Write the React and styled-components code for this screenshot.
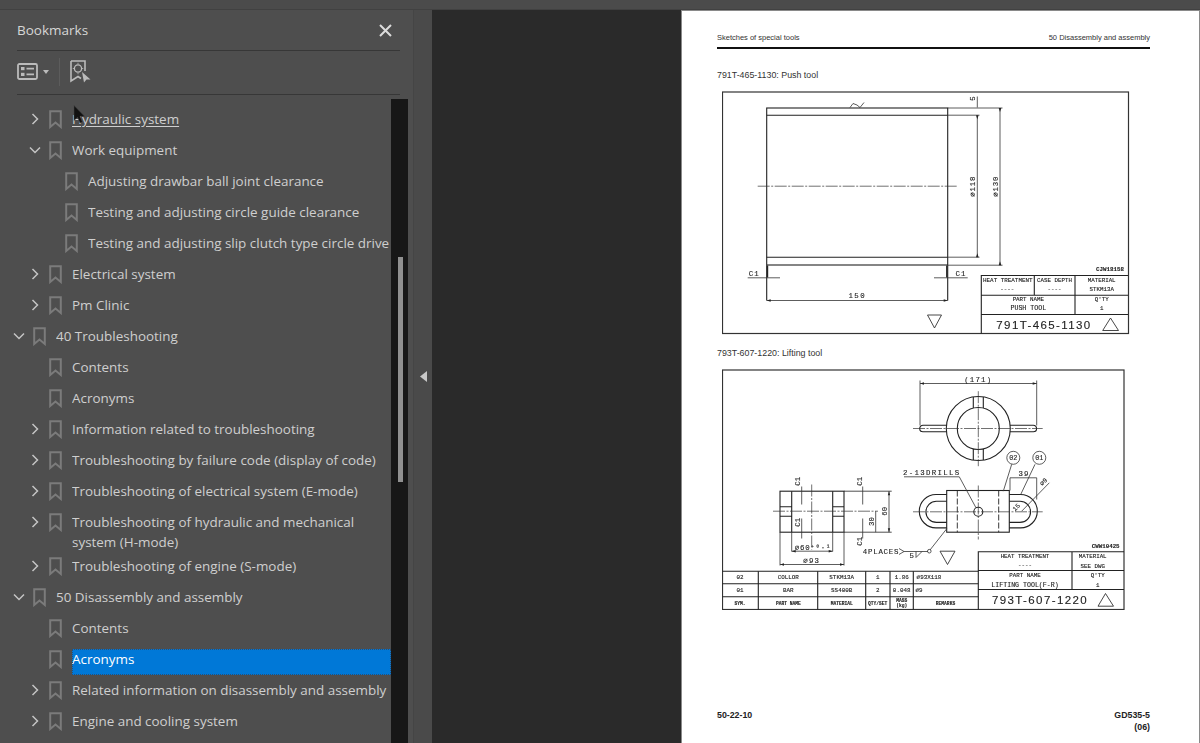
import React from "react";
import styled, { createGlobalStyle } from "styled-components";

const GlobalStyle = createGlobalStyle`
  html, body {
    margin: 0;
    padding: 0;
    height: 100%;
    overflow: hidden;
    background: #2a2a2a;
  }
  #root {
    height: 100%;
  }
`;

const Shell = styled.div`
  width: 1200px;
  height: 743px;
  display: flex;
  flex-direction: column;
  font-family: "Open Sans", "Noto Sans", sans-serif;
  overflow: hidden;
`;

const TopStrip = styled.div`
  height: 9px;
  flex: none;
  background: #4b4b4b;
  border-bottom: 1px solid #414141;
`;

const Workspace = styled.div`
  flex: 1;
  min-height: 0;
  display: flex;
`;

const Panel = styled.aside`
  width: 414px;
  flex: none;
  display: flex;
  flex-direction: column;
  background: #4e4e4e;
  border-right: 1px solid #454545;
  box-sizing: border-box;
  position: relative;
`;

const PanelHeader = styled.div`
  height: 40px;
  margin: 0 13px 0 17px;
  flex: none;
  display: flex;
  align-items: center;
  justify-content: space-between;
  border-bottom: 1px solid #373737;
  color: #d6d6d6;
  font-size: 13.5px;
`;

const CloseButton = styled.button`
  width: 16px;
  height: 16px;
  margin-right: 7px;
  padding: 0;
  border: 0;
  background: none;
  color: #dcdcdc;
  display: flex;
  align-items: center;
  justify-content: center;
`;

const Toolbar = styled.div`
  height: 41px;
  padding-bottom: 2px;
  margin: 0 13px 0 17px;
  flex: none;
  display: flex;
  align-items: center;
  border-bottom: 1px solid #373737;
`;

const ToolDivider = styled.div`
  width: 1px;
  height: 28px;
  margin: 0 10px 0 10px;
  background: #5c5c5c;
`;

const TreeArea = styled.div`
  flex: 1;
  min-height: 0;
  display: flex;
  padding-top: 4px;
  margin-right: 5px;
`;

const TreeList = styled.div`
  flex: 1;
  min-width: 0;
  padding-top: 4.5px;
  overflow: hidden;
`;

const Scrollbar = styled.div`
  width: 17px;
  flex: none;
  background: #171717;
  padding: 158px 5px 0 6.5px;
  box-sizing: border-box;
`;

const ScrollThumb = styled.div`
  height: 225px;
  background: #909090;
`;

const Row = styled.div`
  height: ${(p) => (p.$tall ? "44px" : "31px")};
  display: flex;
  align-items: flex-start;
  padding-left: ${(p) => p.$level * 16 + 10}px;
`;

const ChevronSlot = styled.span`
  width: 17px;
  height: 31px;
  flex: none;
  display: flex;
  align-items: center;
  justify-content: center;
  color: #c4c4c4;
`;

const MarkSlot = styled.span`
  width: 13px;
  height: 31px;
  margin: 0 10px 0 6px;
  flex: none;
  display: flex;
  align-items: center;
  justify-content: center;
`;

const Label = styled.span`
  flex: 1;
  min-width: 0;
  margin-top: 5px;
  height: ${(p) => (p.$tall ? "40px" : p.$selected ? "26px" : "21px")};
  color: ${(p) => (p.$selected ? "#ffffff" : "#cfcfcf")};
  background: ${(p) => (p.$selected ? "#0078d7" : "transparent")};
  outline: ${(p) => (p.$selected ? "1px dotted #2a4f74" : "none")};
  outline-offset: -1px;
  font-size: 13.45px;
  line-height: 20px;
  white-space: ${(p) => (p.$tall ? "normal" : "nowrap")};
  overflow: hidden;
  text-decoration: ${(p) => (p.$link ? "underline" : "none")};
  text-underline-offset: 2px;
`;

const Cursor = styled.svg`
  position: absolute;
  left: 73px;
  top: 95px;
`;

const Splitter = styled.div`
  width: 18px;
  flex: none;
  background: #4a4a4a;
  display: flex;
  align-items: center;
  justify-content: center;
`;

const Gutter = styled.div`
  width: 249px;
  flex: none;
  background: #2a2a2a;
`;

const Sheet = styled.main`
  flex: 1;
  min-width: 0;
  background: #fff;
  border: 1px solid #8a8a8a;
  border-bottom: 0;
  box-sizing: border-box;
  padding: 21px 49px 0 35px;
  font-family: "Liberation Sans", Arial, sans-serif;
  color: #222;
  display: flex;
  flex-direction: column;
`;

const SheetHead = styled.div`
  display: flex;
  justify-content: space-between;
  font-size: 7.5px;
  line-height: 11px;
  padding-bottom: 4px;
  border-bottom: 2px solid #111;
  color: #333;
`;

const Caption = styled.div`
  font-size: 8.85px;
  line-height: 12px;
  color: #333;
  margin-top: ${(p) => p.$top}px;
`;

const Drawing = styled.svg`
  display: block;
  margin-left: 5px;
  margin-top: ${(p) => p.$top}px;
  flex: none;
  filter: blur(0.3px);
  font-family: "Liberation Mono", monospace;
  text {
    stroke: #222;
    stroke-width: 0.12;
    fill: #222;
    text-anchor: middle;
    dominant-baseline: central;
  }
`;

const SheetFoot = styled.div`
  margin-top: 99px;
  display: flex;
  justify-content: space-between;
  font-size: 8.8px;
  line-height: 12px;
  font-weight: 700;
  color: #222;
`;

const FootRight = styled.div`
  text-align: right;
`;

const rows = [
  { level: 1, label: "Hydraulic system", state: "closed", link: true },
  { level: 1, label: "Work equipment", state: "open" },
  { level: 2, label: "Adjusting drawbar ball joint clearance" },
  { level: 2, label: "Testing and adjusting circle guide clearance" },
  { level: 2, label: "Testing and adjusting slip clutch type circle drive" },
  { level: 1, label: "Electrical system", state: "closed" },
  { level: 1, label: "Pm Clinic", state: "closed" },
  { level: 0, label: "40 Troubleshooting", state: "open" },
  { level: 1, label: "Contents" },
  { level: 1, label: "Acronyms" },
  { level: 1, label: "Information related to troubleshooting", state: "closed" },
  { level: 1, label: "Troubleshooting by failure code (display of code)", state: "closed" },
  { level: 1, label: "Troubleshooting of electrical system (E-mode)", state: "closed" },
  { level: 1, label: "Troubleshooting of hydraulic and mechanical system (H-mode)", state: "closed", tall: true },
  { level: 1, label: "Troubleshooting of engine (S-mode)", state: "closed" },
  { level: 0, label: "50 Disassembly and assembly", state: "open" },
  { level: 1, label: "Contents" },
  { level: 1, label: "Acronyms", selected: true },
  { level: 1, label: "Related information on disassembly and assembly", state: "closed" },
  { level: 1, label: "Engine and cooling system", state: "closed" },
];

const Chevron = ({ open }) => (
  <svg width="12" height="12" viewBox="0 0 12 12" fill="none" stroke="currentColor" strokeWidth="1.5">
    {open ? <path d="M1 3.5 6 8.5 11 3.5" /> : <path d="M3.5 1 8.5 6 3.5 11" />}
  </svg>
);

const Mark = () => (
  <svg width="13" height="19" viewBox="0 0 13 19" fill="none" stroke="#7b7b7b" strokeWidth="2">
    <path d="M1.2 1.2H11.8V17L6.5 12.6 1.2 17Z" />
  </svg>
);

const OutlineIcon = () => (
  <svg width="21" height="17" viewBox="0 0 21 17" fill="none">
    <rect x="1" y="1" width="19" height="15" rx="1.5" stroke="#bbb" strokeWidth="1.8" />
    <rect x="4" y="4" width="3.5" height="3.2" fill="#bbb" />
    <rect x="4" y="9.8" width="3.5" height="3.2" fill="#bbb" />
    <path d="M9.5 5.6H17M9.5 11.4H17" stroke="#bbb" strokeWidth="1.8" />
  </svg>
);

const Caret = () => (
  <svg width="6" height="4" viewBox="0 0 6 4" style={{ marginLeft: 5 }}>
    <path d="M0 0H6L3 4Z" fill="#bbb" />
  </svg>
);

const FindMarkIcon = () => (
  <svg width="21" height="23" viewBox="0 0 21 23" fill="none">
    <path d="M1 1H15V11M1 1V21L8 16.5 11 18.5" stroke="#bbb" strokeWidth="1.6" />
    <circle cx="8" cy="8.5" r="3.6" stroke="#bbb" strokeWidth="1.3" />
    <path d="M8 2.8V3.8M8 13.2V14.2M2.8 8.5H3.8M12.2 8.5H13.2" stroke="#bbb" strokeWidth="1" />
    <path d="M12 12 20.5 19.5 16.5 19.5 14 22.5Z" fill="#bbb" />
  </svg>
);

const TreeRow = ({ level, label, state, link, tall, selected }) => (
  <Row $level={level} $tall={tall}>
    <ChevronSlot>{state && <Chevron open={state === "open"} />}</ChevronSlot>
    <MarkSlot>
      <Mark />
    </MarkSlot>
    <Label $tall={tall} $selected={selected} $link={link}>
      {label}
    </Label>
  </Row>
);

// shared line weights for the sketches
const heavy = { stroke: "#222", strokeWidth: 1.1, fill: "none" };
const thin = { stroke: "#333", strokeWidth: 0.8, fill: "none" };
const centre = { stroke: "#333", strokeWidth: 0.7, strokeDasharray: "12 1.5 2 1.5", fill: "none" };
const dashed = { stroke: "#222", strokeWidth: 0.9, strokeDasharray: "6 2", fill: "none" };

const PushToolDrawing = () => (
  <Drawing $top={10} width="408" height="244" viewBox="722 91.5 408 244">
    <rect x="722.5" y="92.5" width="406" height="241.5" fill="none" stroke="#333" strokeWidth="1.2" />
    <g {...heavy}>
      <rect x="766.7" y="108.5" width="181" height="157" />
      <path d="M766.7 115.7H947.7M766.7 257.7H947.7" />
      <path d="M766.7 265.7V301M947.7 265.7V301" />
      <path d="M767.5 266V278M946.8 266V278" strokeWidth="1.4" />
    </g>
    <path d="M757.7 186.7H956.7" {...centre} />
    <path d="M850 108 853 104 857 105.5 860 108 864 103" {...thin} />
    <g {...thin}>
      <path d="M947.7 108.5H1002.5M947.7 115.7H979.5M947.7 257.7H979.5M947.7 265.7H1002.5" />
      <path d="M977.3 97V108M977.3 115.7V257.7M1000 108.5V265.7" />
      <path d="M747.7 278.3H780M934 278.3H967.7M766.7 301H947.7" />
    </g>
    <g fill="#222">
      <path d="M976 115.7h2.6l-1.3 4ZM976 257.7h2.6l-1.3-4ZM998.7 108.5h2.6l-1.3 4ZM998.7 265.7h2.6l-1.3-4ZM766.7 301l4-1.2v2.4ZM947.7 301l-4-1.2v2.4Z" />
    </g>
    <g fontSize="7.4">
      <text x="973" y="99" transform="rotate(-90 973 99)">5</text>
      <text x="972.7" y="186.7" transform="rotate(-90 972.7 186.7)" letterSpacing="0.8">⌀118</text>
      <text x="995.7" y="186.7" transform="rotate(-90 995.7 186.7)" letterSpacing="0.8">⌀130</text>
      <text x="754.3" y="274" letterSpacing="1">C1</text>
      <text x="961" y="274" letterSpacing="1">C1</text>
      <text x="857.3" y="296.5" letterSpacing="1.5">150</text>
    </g>
    <path d="M927.5 315.5H941.5L934.5 328.5Z" {...thin} strokeWidth="0.9" />
    <g {...heavy}>
      <path d="M981.3 334V276H1128M981.3 295.7H1128M981.3 315H1128M1075 276V315M1034.3 276V295.7" />
    </g>
    <g fontSize="5.8">
      <text x="1110" y="270" fontWeight="700">CJW18158</text>
      <text x="1007.8" y="280.5" fontSize="5.9">HEAT TREATMENT</text>
      <text x="1007.3" y="289.5">----</text>
      <text x="1054.5" y="280.5">CASE DEPTH</text>
      <text x="1054.5" y="289.5">----</text>
      <text x="1101.7" y="280.5">MATERIAL</text>
      <text x="1101.7" y="289.5">STKM13A</text>
      <text x="1028.3" y="300">PART NAME</text>
      <text x="1028.3" y="309.3" fontSize="6.6">PUSH TOOL</text>
      <text x="1101.7" y="300">Q'TY</text>
      <text x="1101.7" y="309.3">1</text>
    </g>
    <text x="1044" y="325.3" fontSize="11.5" letterSpacing="1.4" fontFamily="Liberation Sans">791T-465-1130</text>
    <path d="M1110.5 318.5 1118.5 331H1102.7Z" {...thin} strokeWidth="0.9" />
  </Drawing>
);

const LiftingToolDrawing = () => (
  <Drawing $top={10} width="403" height="241" viewBox="722 369.5 403 241">
    <rect x="722.5" y="370.5" width="401.5" height="239.5" fill="none" stroke="#333" strokeWidth="1.2" />

    {/* top view */}
    <g {...heavy}>
      <circle cx="978.3" cy="429" r="32" />
      <circle cx="978.3" cy="429" r="21" />
      <path d="M946.5 425.7H923A3.3 3.3 0 0 0 923 432.3H946.5M1010 425.7H1033.3A3.3 3.3 0 0 1 1033.3 432.3H1010" />
      <path d="M973.3 397.5V408.5M983.3 397.5V408.5M973.3 449.5V460.5M983.3 449.5V460.5" />
    </g>
    <path d="M913 429H1042.7M978.3 391.7V466.7" {...centre} />
    <g {...thin}>
      <path d="M920 384H1036.7M920 381V426M1036.7 381V426" />
    </g>
    <path d="M920 384l4-1.2v2.4ZM1036.7 384l-4-1.2v2.4Z" fill="#222" />
    <text x="978.3" y="380.5" fontSize="7.4" letterSpacing="1.2">(171)</text>

    {/* side view */}
    <g {...heavy}>
      <rect x="946.7" y="491" width="62.6" height="41.7" />
      <circle cx="978.3" cy="512.3" r="4.5" />
      <path d="M946.7 495H936A16.7 16.7 0 0 0 936 528.4H946.7M946.7 501.7H936.5A10.6 10.6 0 0 0 936.5 522.9H946.7" />
      <path d="M1009.3 495H1020.6A16.7 16.7 0 0 1 1020.6 528.4H1009.3M1009.3 501.7H1020A10.6 10.6 0 0 1 1020 522.9H1009.3" />
    </g>
    <path d="M957.3 491V532.7M998.7 491V532.7" {...dashed} />
    <path d="M913 512.3H1042.7M978.3 486V540" {...centre} />
    <circle cx="1013.3" cy="458.3" r="6.5" {...thin} />
    <circle cx="1039.3" cy="458.3" r="6.5" {...thin} />
    <g {...thin}>
      <path d="M1011.7 464.8 1003.3 491.7M1035 464.8 1020.7 495M904 477.3H959.3L976 508.3" />
      <path d="M1010 478.3H1036.7M1010 478.3V491M1036.7 478.3V500M1049.3 483.3 1021.7 511.7" />
      <path d="M904 552H928M930 550.5 946.7 529.3" />
    </g>
    <g fontSize="7.4">
      <text x="1013.3" y="458.3" fontSize="6.8">02</text>
      <text x="1039.3" y="458.3" fontSize="6.8">01</text>
      <text x="931.7" y="473.3" letterSpacing="1.3">2-13DRILLS</text>
      <text x="1024" y="474.3" letterSpacing="1">39</text>
      <text x="1044" y="482.7" transform="rotate(-45 1044 482.7)" fontSize="6.4">⌀9</text>
      <text x="1016.7" y="508.3" transform="rotate(-45 1016.7 508.3)" fontSize="6.4">15</text>
    </g>

    {/* front view */}
    <g {...heavy}>
      <rect x="780" y="491.7" width="64" height="41" />
      <path d="M791.7 491.7V532.7M832.7 491.7V532.7M780 507.3H791.7M780 516.7H791.7M832.7 507.3H844M832.7 516.7H844" />
      <path d="M844 491.7H891.7M844 532.7H891.7" strokeWidth="0.8" />
    </g>
    <path d="M773 511.7H878M811.7 485V550" {...centre} />
    <g {...thin}>
      <path d="M889 491.7V532.7M875.7 511.7V532.7M791.7 532.7V552M832.7 532.7V552M780 532.7V566M844 532.7V566" />
      <path d="M791.7 551.7H832.7M780 565H844" />
      <path d="M801.7 487V505M862.7 487V505M801.7 519V539M862.7 519V539" />
    </g>
    <path d="M791.7 551.7l4-1.2v2.4ZM832.7 551.7l-4-1.2v2.4ZM780 565l4-1.2v2.4ZM844 565l-4-1.2v2.4ZM889 491.7l-1.2 4h2.4ZM889 532.7l-1.2-4h2.4Z" fill="#222" />
    <g fontSize="7.4">
      <text x="798.3" y="481.7" transform="rotate(-90 798.3 481.7)">C1</text>
      <text x="860" y="481.7" transform="rotate(-90 860 481.7)">C1</text>
      <text x="798.3" y="522.7" transform="rotate(-90 798.3 522.7)">C1</text>
      <text x="860" y="541.7" transform="rotate(-90 860 541.7)">C1</text>
      <text x="885" y="511.7" transform="rotate(-90 885 511.7)">60</text>
      <text x="871.7" y="522" transform="rotate(-90 871.7 522)">30</text>
      <text x="813" y="548" letterSpacing="0.8">⌀60⁺⁰·¹</text>
      <text x="811.7" y="561" letterSpacing="1.2">⌀93</text>
      <text x="881" y="552.3" letterSpacing="0.8">4PLACES</text>
      <text x="911.7" y="556">5</text>
    </g>
    <path d="M899 549 904 552 899 555M916 552V558L922 552" {...thin} />
    <circle cx="929.3" cy="551.7" r="1.8" {...thin} />
    <path d="M940 551.7H955L947.5 565Z" {...thin} strokeWidth="0.9" />

    {/* parts list */}
    <g {...heavy}>
      <path d="M722.5 571.7H978.3M722.5 584.3H978.3M722.5 597.3H978.3" />
      <path d="M758.3 571.7V610M817.7 571.7V610M865.7 571.7V610M890 571.7V610M913.3 571.7V610" />
    </g>
    <g fontSize="5.9">
      <text x="740" y="578">02</text>
      <text x="788.3" y="578">COLLOR</text>
      <text x="841.7" y="578">STKM13A</text>
      <text x="877.7" y="578">1</text>
      <text x="901.7" y="578">1.86</text>
      <text x="929" y="578">⌀93X118</text>
      <text x="740" y="591">01</text>
      <text x="788.3" y="591">BAR</text>
      <text x="841.7" y="591">SS400B</text>
      <text x="877.7" y="591">2</text>
      <text x="901.7" y="591">0.048</text>
      <text x="919" y="591">⌀9</text>
    </g>
    <g fontSize="4.6" fontWeight="700">
      <text x="740" y="604">SYM.</text>
      <text x="788.3" y="604">PART NAME</text>
      <text x="841.7" y="604">MATERIAL</text>
      <text x="877.7" y="604">QTY/SET</text>
      <text x="901.7" y="601">MASS</text>
      <text x="901.7" y="606">(kg)</text>
      <text x="945.5" y="604">REMARKS</text>
    </g>

    {/* title block */}
    <g {...heavy}>
      <path d="M978.3 610V552.3H1124M978.3 571H1124M978.3 590H1124M1072 552.3V590" />
    </g>
    <g fontSize="5.8">
      <text x="1105.7" y="546.7" fontWeight="700">CWW10425</text>
      <text x="1025" y="556.7">HEAT TREATMENT</text>
      <text x="1025" y="565.7">----</text>
      <text x="1092.7" y="556.7">MATERIAL</text>
      <text x="1092.7" y="566.7">SEE DWG</text>
      <text x="1025" y="576">PART NAME</text>
      <text x="1025" y="585.7" fontSize="6.6">LIFTING TOOL(F-R)</text>
      <text x="1097.7" y="576">Q'TY</text>
      <text x="1097.7" y="585.7">1</text>
    </g>
    <text x="1040" y="600.7" fontSize="11.5" letterSpacing="1.4" fontFamily="Liberation Sans">793T-607-1220</text>
    <path d="M1105.5 594 1113.5 606.7H1098Z" {...thin} strokeWidth="0.9" />
  </Drawing>
);

export default function App() {
  return (
    <Shell>
      <GlobalStyle />
      <TopStrip />
      <Workspace>
        <Panel>
          <PanelHeader>
            <span>Bookmarks</span>
            <CloseButton aria-label="Close">
              <svg width="13" height="13" viewBox="0 0 13 13" stroke="currentColor" strokeWidth="2">
                <path d="M1 1 12 12M12 1 1 12" />
              </svg>
            </CloseButton>
          </PanelHeader>
          <Toolbar>
            <OutlineIcon />
            <Caret />
            <ToolDivider />
            <FindMarkIcon />
          </Toolbar>
          <TreeArea>
            <TreeList>
              {rows.map((row, i) => (
                <TreeRow key={i} {...row} />
              ))}
            </TreeList>
            <Scrollbar>
              <ScrollThumb />
            </Scrollbar>
          </TreeArea>
          <Cursor width="12" height="19" viewBox="0 0 12 19">
            <path d="M1 .5V15.5L4.6 12.3 7 18 9.4 17 7 11.3H11.5Z" fill="#111" stroke="#444" strokeWidth=".5" />
          </Cursor>
        </Panel>
        <Splitter>
          <svg width="7" height="11" viewBox="0 0 7 11">
            <path d="M7 0V11L0 5.5Z" fill="#c8c8c8" />
          </svg>
        </Splitter>
        <Gutter />
        <Sheet>
          <SheetHead>
            <span>Sketches of special tools</span>
            <span>50 Disassembly and assembly</span>
          </SheetHead>
          <Caption $top={20}>791T-465-1130: Push tool</Caption>
          <PushToolDrawing />
          <Caption $top={12}>793T-607-1220: Lifting tool</Caption>
          <LiftingToolDrawing />
          <SheetFoot>
            <span>50-22-10</span>
            <FootRight>
              GD535-5
              <br />
              (06)
            </FootRight>
          </SheetFoot>
        </Sheet>
      </Workspace>
    </Shell>
  );
}
